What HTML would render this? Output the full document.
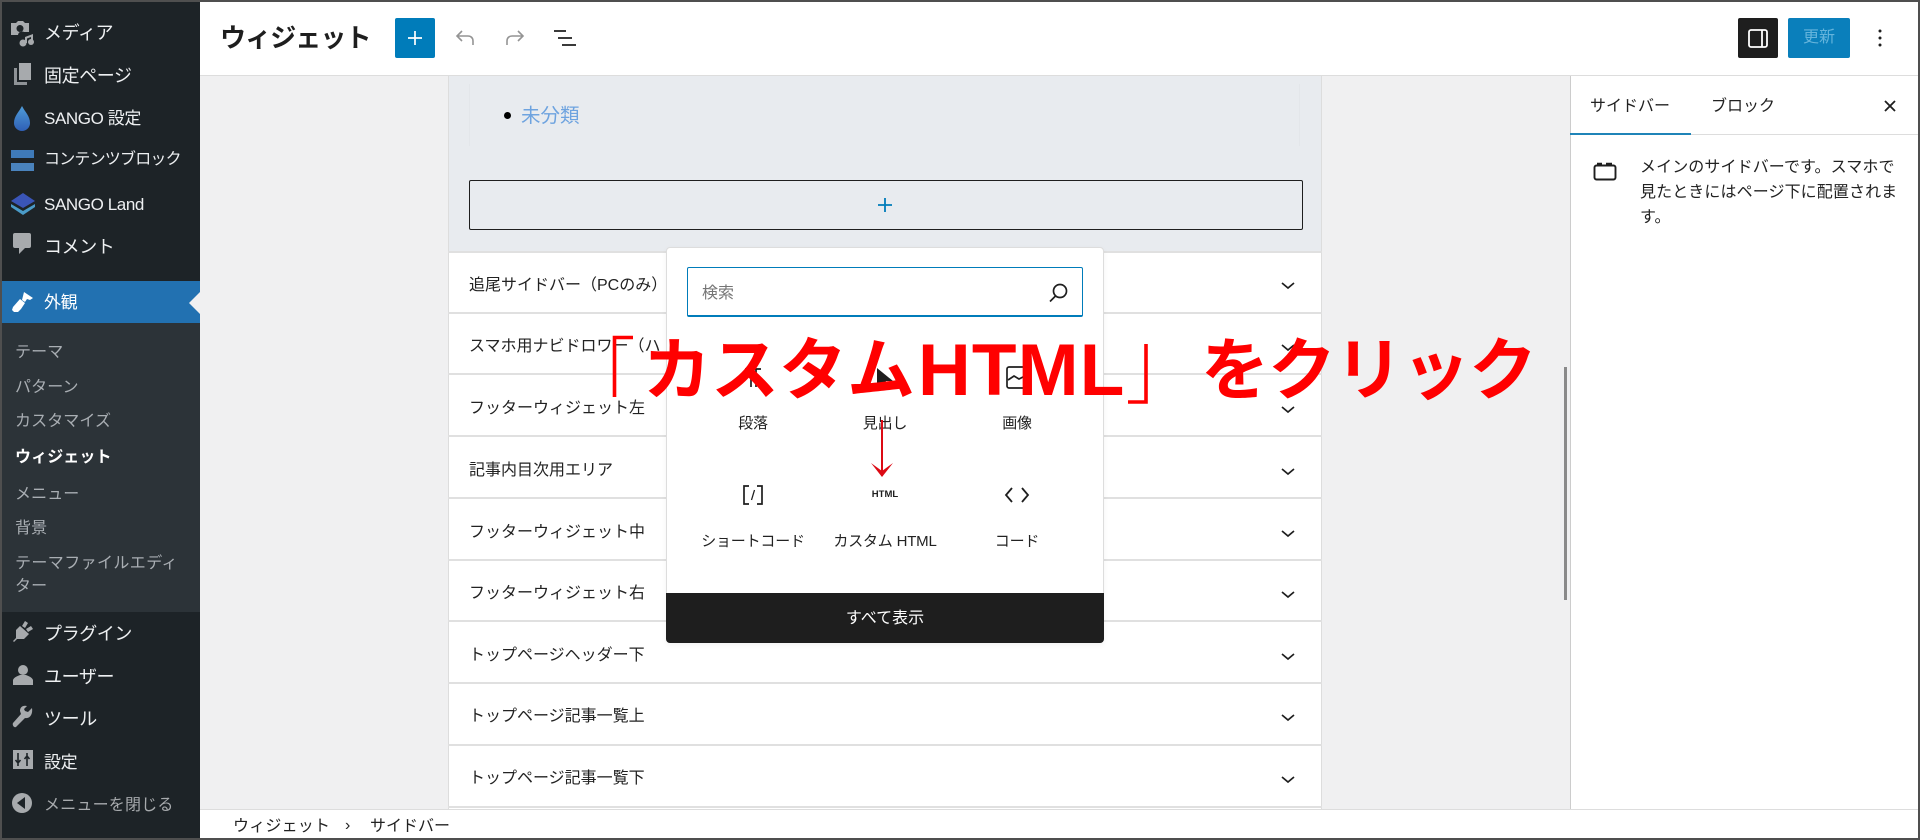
<!DOCTYPE html>
<html lang="ja">
<head>
<meta charset="utf-8">
<title>ウィジェット</title>
<style>
html,body{margin:0;padding:0;width:1920px;height:840px;overflow:hidden;background:#f0f0f1}
body{position:relative;font-family:"Liberation Sans","Noto Sans CJK JP",sans-serif;color:#1e1e1e}
.a{position:absolute;white-space:nowrap}
.t{position:absolute;white-space:nowrap;line-height:24px;transform:translateY(-12px)}
.m{color:#eef0f2;font-size:18px;left:44px;letter-spacing:-.4px;transform:translateY(-11px)}
.s{color:#a9aeb3;font-size:16px;left:15px;letter-spacing:.1px;transform:translateY(-10px)}
.r{left:469px;font-size:16px;color:#222;letter-spacing:0;transform:translateY(-9px)}
.sep{position:absolute;left:448px;width:874px;height:2px;background:#e0e0e0}
.l{font-size:15px;color:#222;transform:translate(-50%,-11px);letter-spacing:-.2px}
svg{position:absolute;overflow:visible}
.red{position:absolute;color:#f00;font-weight:700;white-space:nowrap;line-height:80px;font-size:68px}
</style>
</head>
<body>
<!-- admin menu -->
<div class="a" style="left:0;top:0;width:200px;height:840px;background:#1d2327"></div>
<div class="a" style="left:2px;top:323px;width:198px;height:289px;background:#2c3338"></div>
<div class="a" style="left:2px;top:281px;width:198px;height:42px;background:#2271b1"></div>
<svg style="left:189px;top:292px" width="11" height="22"><path d="M11 0L0 11l11 11z" fill="#f0f0f1"/></svg>

<div class="t m" style="top:32px">メディア</div>
<div class="t m" style="top:75px">固定ページ</div>
<div class="t m" style="top:118px;font-size:17px">SANGO 設定</div>
<div class="t m" style="top:159px;font-size:16px;letter-spacing:-.8px">コンテンツブロック</div>
<div class="t m" style="top:204px;font-size:17px">SANGO Land</div>
<div class="t m" style="top:246px">コメント</div>
<div class="t m" style="top:302px;color:#fff;font-size:17px">外観</div>
<div class="t s" style="top:351px">テーマ</div>
<div class="t s" style="top:386px">パターン</div>
<div class="t s" style="top:420px">カスタマイズ</div>
<div class="t s" style="top:456px;color:#fff;font-weight:700">ウィジェット</div>
<div class="t s" style="top:493px">メニュー</div>
<div class="t s" style="top:527px">背景</div>
<div class="t s" style="top:562px;letter-spacing:.4px">テーマファイルエディ</div>
<div class="t s" style="top:585px">ター</div>
<div class="t m" style="top:633px">プラグイン</div>
<div class="t m" style="top:676px">ユーザー</div>
<div class="t m" style="top:718px">ツール</div>
<div class="t m" style="top:762px;font-size:17px">設定</div>
<div class="t m" style="top:805px;color:#a7aaad;font-size:16px;letter-spacing:.2px">メニューを閉じる</div>

<!-- menu icons -->
<svg style="left:11px;top:20px" width="24" height="24"><path d="M0 3h5l2-2h5l2 2h4v9h-5a4 4 0 0 0-6 3H0zM9 5a3.500 3.500 0 1 0 .01 0z" fill="#a7aaad" fill-rule="evenodd"/><path d="M14 17l8-3v9h-2v-6l-4 1.500V23h-2z" fill="#a7aaad"/><circle cx="12" cy="23" r="3.500" fill="#a7aaad"/><circle cx="20" cy="22" r="3" fill="#a7aaad"/></svg>
<svg style="left:13px;top:63px" width="20" height="22"><path d="M6 0h12v17H6z" fill="#a7aaad"/><path d="M1 5h3v14h10v3H1z" fill="#8e9296"/></svg>
<svg style="left:13px;top:106px" width="18" height="26"><defs><linearGradient id="dg" x1="0" y1="0" x2="0" y2="1"><stop offset="0" stop-color="#4f9cd9"/><stop offset="1" stop-color="#2f5fb5"/></linearGradient></defs><path d="M9 0C12 6 17 10 17 17a8 8 0 0 1-16 0C1 10 6 6 9 0z" fill="url(#dg)"/></svg>
<svg style="left:11px;top:150px" width="23" height="21"><rect width="23" height="8" fill="#3f7ab8"/><rect y="13" width="23" height="8" fill="#4a83bd"/></svg>
<svg style="left:10px;top:193px" width="26" height="22"><path d="M13 0l12 8-12 7L1 8z" fill="#3a55b8"/><path d="M1 11l12 7 12-7v3l-12 8L1 14z" fill="#4a9bc8"/></svg>
<svg style="left:13px;top:233px" width="18" height="21"><path d="M2 0h14a2 2 0 0 1 2 2v11a2 2 0 0 1-2 2h-4l-6 6 0-6H2a2 2 0 0 1-2-2V2a2 2 0 0 1 2-2z" fill="#a7aaad"/></svg>
<svg style="left:11px;top:291px" width="23" height="22"><path d="M13 1l9 6-3 2-3-1-2 3-3-2zM9 8l5 4-4 6-3 3H3l-2-2 1-3z" fill="#fff"/></svg>
<svg style="left:13px;top:621px" width="20" height="21"><path d="M12 0l3 2-3 5-3-2zM18 5l2 3-5 3-2-3zM7 5l9 8-5 5H4l-3 3-1-1 3-3V9z" fill="#a7aaad"/></svg>
<svg style="left:13px;top:664px" width="20" height="21"><circle cx="10" cy="6" r="5" fill="#a7aaad"/><path d="M0 21v-5c1-3 5-4 7-5h6c2 1 6 2 7 5v5z" fill="#a7aaad"/></svg>
<svg style="left:12px;top:706px" width="21" height="22"><path d="M20 2l-4 4-3-1-1-2 3-3c-4-1-7 1-7 5l1 3-8 9c-1 2 1 5 3 4l9-9c5 1 8-4 7-10z" fill="#a7aaad"/></svg>
<svg style="left:13px;top:750px" width="20" height="19"><rect width="20" height="19" fill="#a7aaad"/><path d="M5 3v9M2.500 10L5 13l2.500-3M5 13v3M14 16V7M11.500 9L14 6l2.500 3M14 6V3" stroke="#1d2327" stroke-width="1.600" fill="none"/></svg>
<svg style="left:12px;top:793px" width="20" height="20"><circle cx="10" cy="10" r="10" fill="#a7aaad"/><path d="M13 4v12L5 10z" fill="#1d2327"/></svg>

<!-- center content -->
<div class="a" style="left:448px;top:76px;width:874px;height:733px;background:#fff;border-left:1px solid #ddd;border-right:1px solid #ddd;box-sizing:border-box"></div>
<div class="a" style="left:449px;top:76px;width:872px;height:175px;background:#e8ebef"></div>
<div class="a" style="left:469px;top:84px;width:831px;height:62px;border:1px solid #e3e6ea;border-top:0;border-bottom:0;box-sizing:border-box"></div>
<div class="a" style="left:504px;top:112px;width:7px;height:7px;border-radius:50%;background:#000"></div>
<div class="t" style="left:521px;top:116px;font-size:19.500px;color:#6ea3df">未分類</div>
<div class="a" style="left:469px;top:180px;width:834px;height:50px;border:1px solid #1e1e1e;border-radius:2px;box-sizing:border-box"></div>
<svg style="left:878px;top:198px" width="14" height="14"><path d="M7 0v14M0 7h14" stroke="#007cba" stroke-width="1.800"/></svg>

<div class="sep" style="top:251px"></div><div class="sep" style="top:312px"></div><div class="sep" style="top:373px"></div><div class="sep" style="top:435px"></div><div class="sep" style="top:497px"></div><div class="sep" style="top:559px"></div><div class="sep" style="top:620px"></div><div class="sep" style="top:682px"></div><div class="sep" style="top:744px"></div><div class="sep" style="top:806px"></div>
<div class="t r" style="top:283px">追尾サイドバー（PCのみ）</div>
<div class="t r" style="top:344px">スマホ用ナビドロワー（ハ</div>
<div class="t r" style="top:406px">フッターウィジェット左</div>
<div class="t r" style="top:468px">記事内目次用エリア</div>
<div class="t r" style="top:530px">フッターウィジェット中</div>
<div class="t r" style="top:591px">フッターウィジェット右</div>
<div class="t r" style="top:653px">トップページヘッダー下</div>
<div class="t r" style="top:714px">トップページ記事一覧上</div>
<div class="t r" style="top:776px">トップページ記事一覧下</div>
<svg style="left:1281px;top:1px" width="14" height="840"><g fill="none" stroke="#1e1e1e" stroke-width="1.700"><path d="M1 282l6 5 6-5M1 344l6 5 6-5M1 406l6 5 6-5M1 468l6 5 6-5M1 530l6 5 6-5M1 591l6 5 6-5M1 653l6 5 6-5M1 714l6 5 6-5M1 776l6 5 6-5"/></g></svg>

<!-- scrollbar -->
<div class="a" style="left:1564px;top:367px;width:3px;height:233px;background:#8a8a8a"></div>

<!-- header -->
<div class="a" style="left:200px;top:2px;width:1718px;height:73px;background:#fff;border-bottom:1px solid #ddd"></div>
<div class="t" style="left:220px;top:38px;font-size:26px;font-weight:700;letter-spacing:-.9px;color:#1e1e1e">ウィジェット</div>
<div class="a" style="left:395px;top:18px;width:40px;height:40px;background:#007cba;border-radius:2px"></div>
<svg style="left:408px;top:31px" width="14" height="14"><path d="M7 0v14M0 7h14" stroke="#fff" stroke-width="1.700"/></svg>
<svg style="left:455px;top:30px" width="20" height="16" fill="none" stroke="#949494" stroke-width="1.600"><path d="M7 1L2 6l5 5M2 6h11c3 0 5 2 5 5v4"/></svg>
<svg style="left:505px;top:30px" width="20" height="16" fill="none" stroke="#949494" stroke-width="1.600"><path d="M13 1l5 5-5 5M18 6H7c-3 0-5 2-5 5v4"/></svg>
<svg style="left:553px;top:29px" width="24" height="18" fill="none" stroke="#1e1e1e" stroke-width="1.700"><path d="M1 2h12M5 9h14M9 16h14"/></svg>

<div class="a" style="left:1738px;top:18px;width:40px;height:40px;background:#1e1e1e;border-radius:2px"></div>
<svg style="left:1748px;top:29px" width="20" height="19" fill="none" stroke="#fff" stroke-width="1.800"><rect x="1" y="1" width="18" height="17" rx="2"/><path d="M14 1v17"/></svg>
<div class="a" style="left:1788px;top:18px;width:62px;height:40px;background:#0a7fbb;border-radius:2px;color:#64b4dc;font-size:16px;line-height:40px;text-align:center">更新</div>
<svg style="left:1876px;top:28px" width="8" height="20" fill="#1e1e1e"><circle cx="4" cy="3" r="1.500"/><circle cx="4" cy="10" r="1.500"/><circle cx="4" cy="17" r="1.500"/></svg>

<!-- right sidebar -->
<div class="a" style="left:1570px;top:76px;width:348px;height:733px;background:#fff;border-left:1px solid #ccc;box-sizing:border-box"></div>
<div class="a" style="left:1571px;top:134px;width:347px;height:1px;background:#ddd"></div>
<div class="a" style="left:1570px;top:133px;width:121px;height:2px;background:#1f84b8"></div>
<div class="t" style="left:1590px;top:107px;font-size:16px;color:#222">サイドバー</div>
<div class="t" style="left:1711px;top:107px;font-size:16px;color:#222">ブロック</div>
<svg style="left:1884px;top:100px" width="12" height="12" stroke="#1e1e1e" stroke-width="1.800"><path d="M1 1l10 10M11 1L1 11"/></svg>
<svg style="left:1593px;top:161px" width="24" height="20" fill="none" stroke="#1e1e1e" stroke-width="1.900"><rect x="1.500" y="4.500" width="21" height="14" rx="2"/><path d="M4 3h5M13 3h6" stroke-width="2.400"/></svg>
<div class="a" style="left:1640px;top:155px;width:270px;font-size:16px;line-height:25px;color:#222;white-space:nowrap;letter-spacing:.1px">メインのサイドバーです。スマホで<br>見たときにはページ下に配置されま<br>す。</div>

<!-- breadcrumb -->
<div class="a" style="left:200px;top:809px;width:1718px;height:29px;background:#fff;border-top:1px solid #ddd;box-sizing:border-box"></div>
<div class="t" style="left:233px;top:827px;font-size:16px;letter-spacing:.2px;color:#222">ウィジェット</div>
<div class="t" style="left:345px;top:826px;font-size:16px;color:#222">›</div>
<div class="t" style="left:370px;top:827px;font-size:16px;color:#222">サイドバー</div>

<!-- popup -->
<div class="a" style="left:666px;top:247px;width:438px;height:396px;background:#fff;border:1px solid #ddd;border-radius:4px;box-sizing:border-box;box-shadow:0 2px 6px rgba(0,0,0,.05)"></div>
<div class="a" style="left:687px;top:267px;width:396px;height:50px;border:1px solid #007cba;border-bottom-width:2px;border-radius:2px;box-sizing:border-box;background:#fff"></div>
<div class="t" style="left:702px;top:294px;font-size:16px;color:#757575">検索</div>
<svg style="left:1049px;top:283px" width="20" height="20" fill="none" stroke="#1e1e1e" stroke-width="1.700"><circle cx="11" cy="8" r="6.500"/><path d="M6.500 13L1 18.500"/></svg>

<svg style="left:744px;top:367px" width="18" height="22" fill="none" stroke="#1e1e1e" stroke-width="1.700"><path d="M1 2h16M7 2v18M12 2v18"/></svg>
<svg style="left:876px;top:367px" width="20" height="20"><path d="M1 1l16 13-7 0-3 5-6-3z" fill="#1e1e1e"/></svg>
<svg style="left:1006px;top:366px" width="24" height="24" fill="none" stroke="#1e1e1e" stroke-width="1.700"><rect x="1" y="1" width="22" height="21" rx="2"/><path d="M2 14l6-4 5 3 6-3"/></svg>

<div class="t l" style="left:753px;top:423px">段落</div>
<div class="t l" style="left:885px;top:423px">見出し</div>
<div class="t l" style="left:1017px;top:423px">画像</div>

<svg style="left:743px;top:485px" width="20" height="20" fill="none" stroke="#1e1e1e" stroke-width="1.700"><path d="M6 1H1v18h5M14 1h5v18h-5"/><path d="M11.500 5L8.500 15" stroke-width="1.300"/></svg>
<div class="t" style="left:885px;top:495px;font-size:9.500px;font-weight:700;color:#1e1e1e;transform:translate(-50%,-12px)">HTML</div>
<svg style="left:1005px;top:486px" width="24" height="18" fill="none" stroke="#1e1e1e" stroke-width="1.800"><path d="M7 2L1 9l6 7M17 2l6 7-6 7"/></svg>

<div class="t l" style="left:753px;top:541px">ショートコード</div>
<div class="t l" style="left:885px;top:541px">カスタム HTML</div>
<div class="t l" style="left:1017px;top:541px">コード</div>

<div class="a" style="left:666px;top:593px;width:438px;height:50px;background:#1e1e1e;border-radius:0 0 4px 4px;color:#fff;font-size:16px;line-height:52px;text-align:center">すべて表示</div>

<!-- red arrow -->
<svg style="left:870px;top:418px" width="24" height="62" fill="none"><path d="M12 2v56" stroke="#dc0a14" stroke-width="2"/><path d="M1 45l11 14 11-14-11 8z" fill="#dc0a14"/></svg>

<!-- red annotation -->
<svg style="left:610px;top:334px" width="28" height="66"><path d="M4.500 63V3.500H23" fill="none" stroke="#f00" stroke-width="3.600"/></svg>
<div class="red" style="left:643px;top:331px">カスタム</div>
<div class="red" style="left:918px;top:331px;font-family:'Liberation Sans',sans-serif;font-size:73px;letter-spacing:1.200px">HTML</div>
<svg style="left:1128px;top:344px" width="22" height="62"><path d="M18 0v58H0" fill="none" stroke="#f00" stroke-width="3.600"/></svg>
<div class="red" style="left:1201px;top:331px;letter-spacing:-1px">をクリック</div>

<!-- screenshot frame -->
<div class="a" style="left:0;top:0;width:1920px;height:840px;border:2px solid #4f4f4f;box-sizing:border-box;pointer-events:none"></div>
</body>
</html>
